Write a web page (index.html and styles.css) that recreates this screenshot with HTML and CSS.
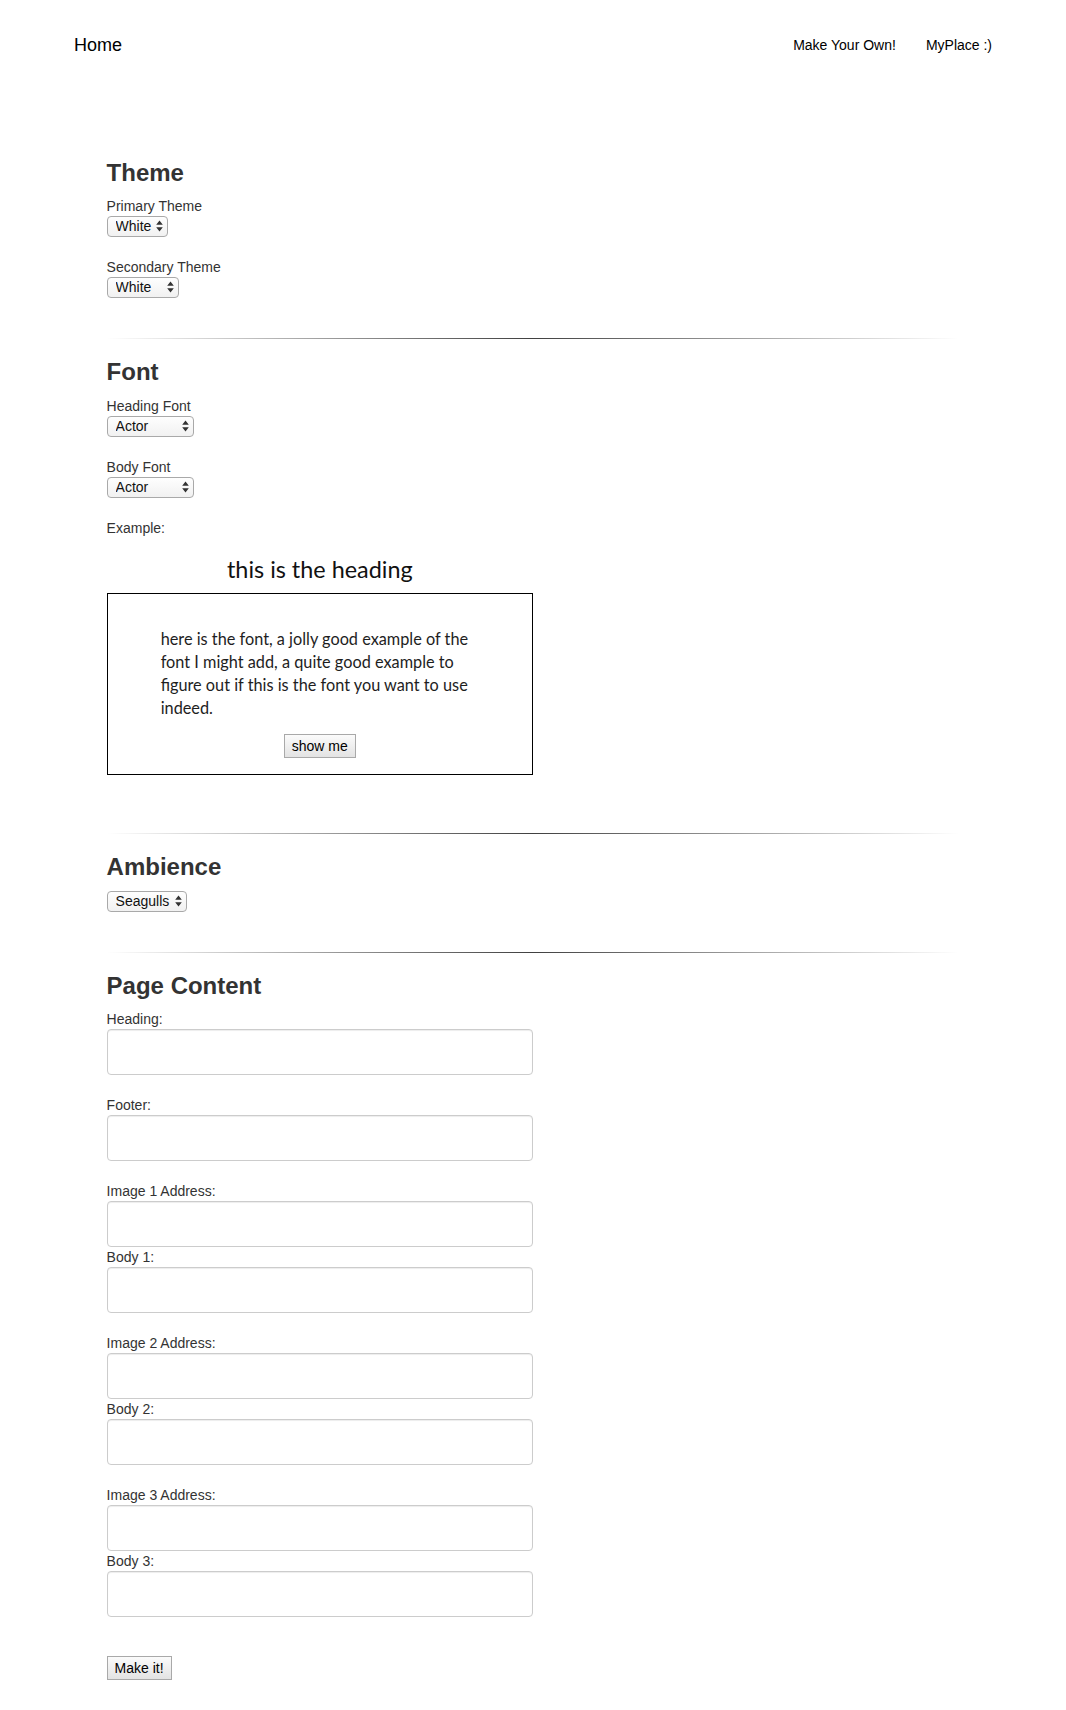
FILE: index.html
```html
<!DOCTYPE html>
<html lang="en">
<head>
<meta charset="utf-8">
<title>Make Your Own</title>
<link rel="stylesheet" href="styles.css">
</head>
<body>
<nav class="navbar">
  <a class="brand" href="#">Home</a>
  <div class="nav-links">
    <a class="nav-link" href="#">Make Your Own!</a>
    <a class="nav-link" href="#">MyPlace :)</a>
  </div>
</nav>

<main class="page">
  <section class="group">
    <h3 class="group-title">Theme</h3>
    <div class="field">
      <label class="field-label">Primary Theme</label>
      <div class="select w-primary">
        <select class="select-input"><option>White</option><option>Black</option></select>
        <svg class="select-arrows" viewBox="0 0 7 12" width="7" height="12"><path d="M3.5 0.5 L6.8 4.8 L0.2 4.8 Z M0.2 7.2 L6.8 7.2 L3.5 11.5 Z"/></svg>
      </div>
    </div>
    <div class="field">
      <label class="field-label">Secondary Theme</label>
      <div class="select w-secondary">
        <select class="select-input"><option>White</option><option>Silver</option></select>
        <svg class="select-arrows" viewBox="0 0 7 12" width="7" height="12"><path d="M3.5 0.5 L6.8 4.8 L0.2 4.8 Z M0.2 7.2 L6.8 7.2 L3.5 11.5 Z"/></svg>
      </div>
    </div>
  </section>

  <hr class="rule">

  <section class="group">
    <h3 class="group-title">Font</h3>
    <div class="field">
      <label class="field-label">Heading Font</label>
      <div class="select w-font">
        <select class="select-input"><option>Actor</option><option>Lato</option></select>
        <svg class="select-arrows" viewBox="0 0 7 12" width="7" height="12"><path d="M3.5 0.5 L6.8 4.8 L0.2 4.8 Z M0.2 7.2 L6.8 7.2 L3.5 11.5 Z"/></svg>
      </div>
    </div>
    <div class="field">
      <label class="field-label">Body Font</label>
      <div class="select w-font">
        <select class="select-input"><option>Actor</option><option>Lato</option></select>
        <svg class="select-arrows" viewBox="0 0 7 12" width="7" height="12"><path d="M3.5 0.5 L6.8 4.8 L0.2 4.8 Z M0.2 7.2 L6.8 7.2 L3.5 11.5 Z"/></svg>
      </div>
    </div>
    <div class="example">
      <div class="field-label">Example:</div>
      <h3 class="example-heading">this is the heading</h3>
      <div class="example-box">
        <p class="example-text">here is the font, a jolly good example of the<br>font I might add, a quite good example to<br>figure out if this is the font you want to use<br>indeed.</p>
        <div class="example-actions"><button class="btn" type="button">show me</button></div>
      </div>
    </div>
  </section>

  <hr class="rule">

  <section class="group">
    <h3 class="group-title">Ambience</h3>
    <div class="field">
      <div class="select w-ambience">
        <select class="select-input"><option>Seagulls</option><option>Rain</option></select>
        <svg class="select-arrows" viewBox="0 0 7 12" width="7" height="12"><path d="M3.5 0.5 L6.8 4.8 L0.2 4.8 Z M0.2 7.2 L6.8 7.2 L3.5 11.5 Z"/></svg>
      </div>
    </div>
  </section>

  <hr class="rule">

  <section class="group">
    <h3 class="group-title">Page Content</h3>
    <div class="field">
      <label class="field-label">Heading:</label>
      <input class="text-input" type="text">
    </div>
    <div class="field">
      <label class="field-label">Footer:</label>
      <input class="text-input" type="text">
    </div>
    <div class="field">
      <label class="field-label">Image 1 Address:</label>
      <input class="text-input" type="text">
      <label class="field-label">Body 1:</label>
      <input class="text-input" type="text">
    </div>
    <div class="field">
      <label class="field-label">Image 2 Address:</label>
      <input class="text-input" type="text">
      <label class="field-label">Body 2:</label>
      <input class="text-input" type="text">
    </div>
    <div class="field">
      <label class="field-label">Image 3 Address:</label>
      <input class="text-input" type="text">
      <label class="field-label">Body 3:</label>
      <input class="text-input" type="text">
    </div>
    <div class="submit-row"><button class="btn" type="button">Make it!</button></div>
  </section>
</main>
</body>
</html>
```

FILE: styles.css
```css
* { box-sizing: border-box; }

html, body {
  margin: 0;
  padding: 0;
  background: #fff;
}

body {
  font-family: "Liberation Sans", Arial, sans-serif;
  font-size: 14px;
  line-height: 20px;
  color: #333;
}

.navbar {
  display: flex;
  justify-content: space-between;
  align-items: center;
  margin-top: 20px;
  height: 50px;
  padding: 0 59px;
}

.brand {
  padding: 15px;
  font-size: 18px;
  line-height: 20px;
  color: #000;
  text-decoration: none;
}

.nav-links {
  display: flex;
}

.nav-link {
  padding: 15px;
  font-size: 14px;
  line-height: 20px;
  color: #000;
  text-decoration: none;
}

.page {
  width: 80%;
  margin: 0 auto;
  padding-top: 70px;
  padding-bottom: 20px;
}

.group-title {
  margin: 20px 0 10px;
  font-size: 24px;
  line-height: 26.4px;
  font-weight: bold;
  color: #333;
}

.field {
  margin-bottom: 20px;
}

.field-label {
  display: block;
  line-height: 20px;
  color: #333;
}

.select {
  position: relative;
  height: 21px;
}

.w-primary { width: 61px; }
.w-secondary { width: 72px; }
.w-font { width: 87px; }
.w-ambience { width: 80px; }

.select-input {
  -webkit-appearance: none;
  appearance: none;
  display: block;
  width: 100%;
  height: 100%;
  margin: 0;
  padding: 0 0 0 8px;
  border: 1px solid #a9a9a9;
  border-radius: 4px;
  background: linear-gradient(#fefefe, #f1f1f1);
  font-family: "Liberation Sans", Arial, sans-serif;
  font-size: 14px;
  line-height: 19px;
  color: #111;
}

.select-arrows {
  position: absolute;
  right: 5px;
  top: 4px;
  fill: #333;
  pointer-events: none;
}

.rule {
  border: 0;
  height: 1px;
  margin: 40px 0 20px;
  background-image: linear-gradient(to right, rgba(0, 0, 0, 0), rgba(0, 0, 0, 0.75), rgba(0, 0, 0, 0));
}

.example {
  width: 50%;
  margin-bottom: 58px;
}

.example-heading {
  margin: 18px 0 11px;
  text-align: center;
  font-family: Lato, "Open Sans", sans-serif;
  font-weight: normal;
  font-size: 23.4px;
  line-height: 26.4px;
  color: #111;
}

.example-box {
  border: 1px solid #000;
  padding: 34px 0 14px;
  height: 182px;
}

.example-text {
  width: 75%;
  margin: 0 auto;
  font-family: Lato, "Open Sans", sans-serif;
  font-size: 16.3px;
  line-height: 22.86px;
  color: #1e1e1e;
  white-space: nowrap;
}

.example-actions {
  margin-top: 14px;
  text-align: center;
}

.btn {
  display: inline-block;
  margin: 0;
  padding: 1px 7px;
  border: 1px solid #a9a9a9;
  border-radius: 0;
  background: linear-gradient(#fbfbfb, #e3e3e3);
  font-family: "Liberation Sans", Arial, sans-serif;
  font-size: 14px;
  line-height: 20px;
  color: #000;
}

.text-input {
  display: block;
  width: 50%;
  height: 46px;
  margin: 0;
  padding: 6px 12px;
  border: 1px solid #ccc;
  border-radius: 4px;
  background: #fff;
  box-shadow: inset 0 1px 1px rgba(0, 0, 0, 0.075);
  font-family: "Liberation Sans", Arial, sans-serif;
  font-size: 14px;
}

.submit-row {
  margin-top: 39px;
}
```
